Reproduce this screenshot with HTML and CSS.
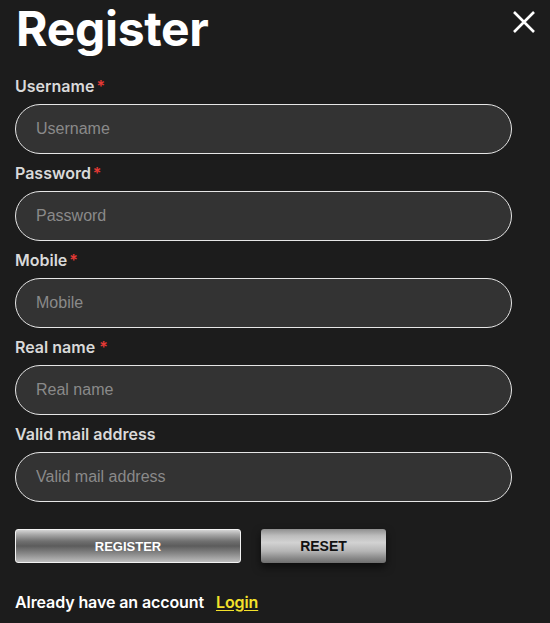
FILE: index.html
```
<!DOCTYPE html>
<html lang="en">
<head>
<meta charset="utf-8">
<title>Register</title>
<link rel="stylesheet" href="styles.css">
</head>
<body>
<div class="page">
  <header class="head">
    <h1 class="title">Register</h1>
    <button class="close" aria-label="Close">
      <svg width="22" height="22" viewBox="0 0 22 22"><path d="M1 1L21 21M21 1L1 21" stroke="#fff" stroke-width="2.6" fill="none"/></svg>
    </button>
  </header>
  <form class="form">
    <div class="field">
      <label class="label">Username<span class="req">*</span></label>
      <input class="input" type="text" placeholder="Username">
    </div>
    <div class="field">
      <label class="label">Password<span class="req">*</span></label>
      <input class="input" type="password" placeholder="Password">
    </div>
    <div class="field">
      <label class="label">Mobile<span class="req">*</span></label>
      <input class="input" type="text" placeholder="Mobile">
    </div>
    <div class="field">
      <label class="label">Real name <span class="req sp">*</span></label>
      <input class="input" type="text" placeholder="Real name">
    </div>
    <div class="field">
      <label class="label">Valid mail address</label>
      <input class="input" type="text" placeholder="Valid mail address">
    </div>
    <div class="actions">
      <button type="button" class="btn btn-register">REGISTER</button>
      <button type="button" class="btn btn-reset">RESET</button>
    </div>
    <p class="login-line">Already have an account <a class="login" href="#">Login</a></p>
  </form>
</div>
</body>
</html>
```
FILE: styles.css
```
* { box-sizing: border-box; }
html, body { margin: 0; padding: 0; }
body {
  background: #1c1c1c;
  font-family: Inter, "Liberation Sans", sans-serif;
  color: #fff;
  width: 550px;
  height: 623px;
  overflow: hidden;
}
.page { padding: 0 15px; }
.head {
  display: flex;
  justify-content: space-between;
  align-items: flex-start;
  height: 76px;
}
.title {
  margin: 0;
  font-size: 48px;
  line-height: 58px;
  font-weight: 700;
  letter-spacing: -0.3px;
  color: #fff;
  padding-left: 1px;
}
.close {
  background: none;
  border: 0;
  padding: 0;
  margin-top: 11px;
  width: 22px;
  height: 22px;
  cursor: pointer;
}
.close svg { display: block; }
.form { width: 497px; }
.field { display: flex; flex-direction: column; margin-bottom: 9px; }
.label {
  font-size: 16px;
  line-height: 20px;
  font-weight: 600;
  color: #d9d9d9;
  margin-bottom: 8px;
}
.req { color: #e53935; margin-left: 2px; }
.req.sp { margin-left: 0; }
.input {
  height: 50px;
  width: 497px;
  border: 1px solid #e6e6e6;
  border-radius: 25px;
  background: #333333;
  padding: 0 20px;
  font-family: "Liberation Sans", Arial, sans-serif;
  font-size: 16px;
  color: #fff;
  outline: none;
}
.input::placeholder { color: #8a8a8a; }
.actions {
  display: flex;
  gap: 20px;
  margin-top: 27px;
}
.btn {
  height: 34px;
  font-family: "Liberation Sans", Arial, sans-serif;
  font-weight: 700;
  font-size: 13px;
  cursor: pointer;
}
.btn-register {
  width: 226px;
  color: #fff;
  border: 1px solid #f2f2f2;
  border-radius: 3px;
  background: linear-gradient(to bottom, #d4d4d4 0%, #a6a6a6 15%, #707070 35%, #5c5c5c 50%, #8a8a8a 75%, #bdbdbd 100%);
}
.btn-reset {
  width: 125px;
  color: #111;
  border: 0;
  border-radius: 3px;
  font-size: 14px;
  background: linear-gradient(to bottom, #8f8f8f 0%, #bdbdbd 20%, #d2d2d2 40%, #b5b5b5 65%, #8a8a8a 85%, #6e6e6e 100%);
  box-shadow: 0 4px 8px rgba(0,0,0,0.6);
}
.login-line {
  margin: 29px 0 0;
  font-size: 16px;
  line-height: 20px;
  font-weight: 600;
  letter-spacing: -0.1px;
  color: #fff;
}
.login {
  color: #f3e12b;
  margin-left: 8px;
  text-decoration: underline;
  text-underline-offset: 2px;
}
```
